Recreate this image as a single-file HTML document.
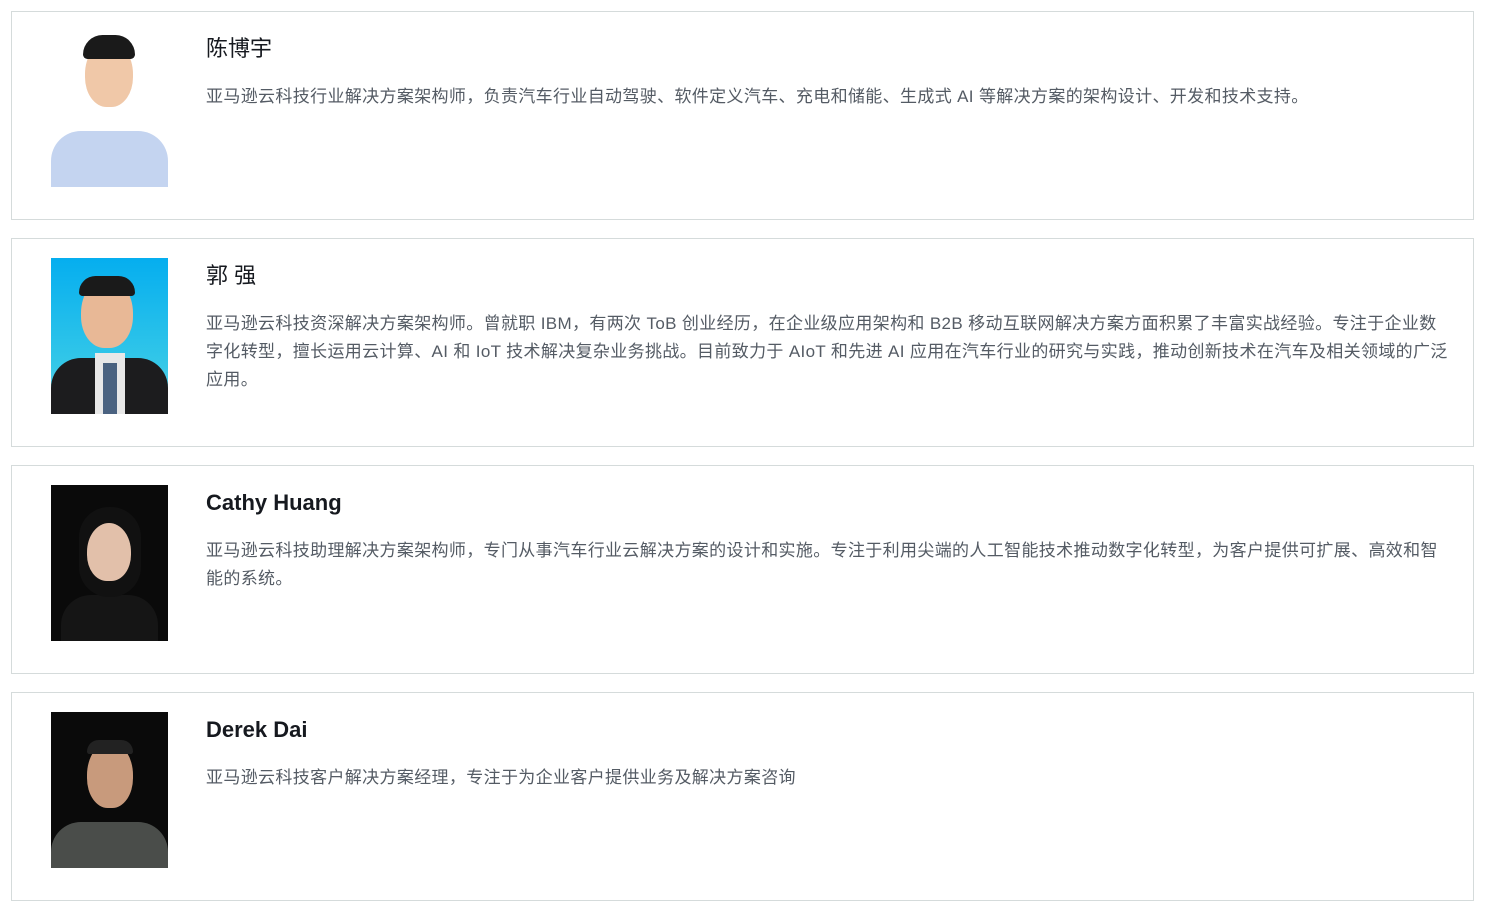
<!DOCTYPE html>
<html><head><meta charset="utf-8"><style>
body{margin:0;background:#fff;font-family:"Liberation Sans","Noto Sans CJK SC",sans-serif;}
.card{position:absolute;left:11px;width:1463px;height:209px;border:1px solid #d5dbdb;box-sizing:border-box;}
.ph{position:absolute;left:39px;top:19px;width:117px;height:156px;overflow:hidden;}
.name{position:absolute;left:194px;top:21px;font-size:22px;color:#16191f;line-height:32px;}
.name.b{font-weight:bold;}
.txt{position:absolute;left:194px;top:71px;width:1243px;font-size:17px;letter-spacing:0.35px;line-height:28px;color:#545b64;}
.head{position:absolute;border-radius:50% 50% 45% 45%;}
</style></head><body>
<div class="card" style="top:11px">
 <div class="ph" style="background:#fff">
  <div style="position:absolute;left:0;top:100px;width:117px;height:56px;background:#c4d4f0;border-radius:30px 30px 0 0"></div>
  <div class="head" style="left:34px;top:10px;width:48px;height:66px;background:#f0c8a8"></div>
  <div style="position:absolute;left:32px;top:4px;width:52px;height:24px;background:#1a1a1a;border-radius:26px 26px 6px 6px"></div>
 </div>
 <div class="name">陈博宇</div>
 <div class="txt">亚马逊云科技行业解决方案架构师，负责汽车行业自动驾驶、软件定义汽车、充电和储能、生成式 AI 等解决方案的架构设计、开发和技术支持。</div>
</div>
<div class="card" style="top:238px">
 <div class="ph" style="background:linear-gradient(#05aeef,#35c8e8 70%,#8ad8e8)">
  <div style="position:absolute;left:0;top:100px;width:117px;height:56px;background:#1c1c1e;border-radius:30px 30px 0 0"></div>
  <div style="position:absolute;left:44px;top:95px;width:30px;height:61px;background:#e8e8e8"></div>
  <div style="position:absolute;left:52px;top:105px;width:14px;height:51px;background:#4a6280"></div>
  <div class="head" style="left:30px;top:20px;width:52px;height:70px;background:#e8b896"></div>
  <div style="position:absolute;left:28px;top:18px;width:56px;height:20px;background:#1a1a1a;border-radius:28px 28px 6px 6px"></div>
 </div>
 <div class="name">郭 强</div>
 <div class="txt">亚马逊云科技资深解决方案架构师。曾就职 IBM，有两次 ToB 创业经历，在企业级应用架构和 B2B 移动互联网解决方案方面积累了丰富实战经验。专注于企业数字化转型，擅长运用云计算、AI 和 IoT 技术解决复杂业务挑战。目前致力于 AIoT 和先进 AI 应用在汽车行业的研究与实践，推动创新技术在汽车及相关领域的广泛应用。</div>
</div>
<div class="card" style="top:465px">
 <div class="ph" style="background:#0a0a0a">
  <div style="position:absolute;left:10px;top:110px;width:97px;height:46px;background:#151515;border-radius:30px 30px 0 0"></div>
  <div style="position:absolute;left:28px;top:22px;width:62px;height:90px;background:#111;border-radius:30px"></div>
  <div class="head" style="left:36px;top:38px;width:44px;height:58px;background:#e2c0aa"></div>
 </div>
 <div class="name b">Cathy Huang</div>
 <div class="txt">亚马逊云科技助理解决方案架构师，专门从事汽车行业云解决方案的设计和实施。专注于利用尖端的人工智能技术推动数字化转型，为客户提供可扩展、高效和智能的系统。</div>
</div>
<div class="card" style="top:692px">
 <div class="ph" style="background:#0a0a0a">
  <div style="position:absolute;left:0;top:110px;width:117px;height:46px;background:#4a4d4a;border-radius:30px 30px 0 0"></div>
  <div class="head" style="left:36px;top:30px;width:46px;height:66px;background:#c89a7c"></div>
  <div style="position:absolute;left:36px;top:28px;width:46px;height:14px;background:#222;border-radius:20px 20px 4px 4px"></div>
 </div>
 <div class="name b">Derek Dai</div>
 <div class="txt">亚马逊云科技客户解决方案经理，专注于为企业客户提供业务及解决方案咨询</div>
</div>
</body></html>
